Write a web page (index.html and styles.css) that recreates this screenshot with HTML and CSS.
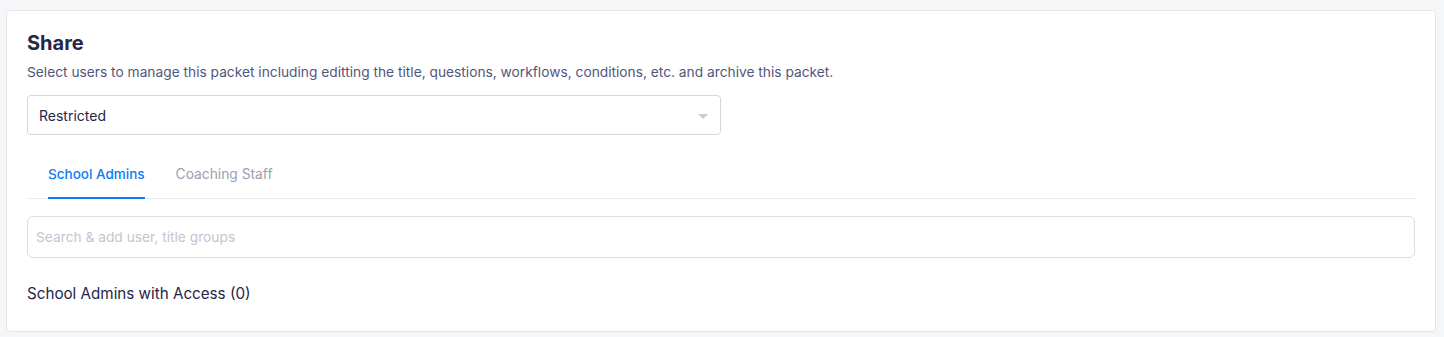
FILE: index.html
```html
<!DOCTYPE html>
<html lang="en">
<head>
  <meta charset="UTF-8">
  <meta name="viewport" content="width=device-width, initial-scale=1.0">
  <title>Share packet</title>
  <link rel="stylesheet" href="styles.css">
</head>
<body>
  <div class="card">
    <h2 class="card-title">Share</h2>
    <p class="card-desc">Select users to manage this packet including editting the title, questions, workflows, conditions, etc. and archive this packet.</p>

    <!-- access select -->
    <div class="select">
      <span class="select-value">Restricted</span>
      <span class="select-caret"></span>
    </div>

    <!-- tabs -->
    <div class="tabs">
      <div class="tab active">School Admins</div>
      <div class="tab">Coaching Staff</div>
    </div>

    <div class="search">
      <input type="text" class="search-input" placeholder="Search &amp; add user, title groups">
    </div>

    <div class="access-title">School Admins with Access (0)</div>
  </div>
</body>
</html>
```

FILE: styles.css
```css
body {
  margin: 0;
  padding: 10px 8px 5px 6px;
  background-color: #f5f6f8;
  font-family: Inter, "Noto Sans", Arial, sans-serif;
  color: #25264a;
}

.card {
  background-color: #fff;
  border: 1px solid #e5e6ea;
  border-radius: 4px;
  padding: 20px;
  height: 280px;
}

.card-title {
  margin: 0;
  font-size: 20px;
  font-weight: 700;
  line-height: 24px;
  color: #25264a;
}

.card-desc {
  margin: 8px 0 0 0;
  font-size: 13.75px;
  line-height: 18px;
  color: #51577d;
}

.select {
  display: flex;
  align-items: center;
  justify-content: space-between;
  margin-top: 14px;
  padding: 0 11px;
  box-sizing: border-box;
  width: 694px;
  height: 40px;
  border: 1px solid #d6d6dc;
  border-radius: 4px;
}

.select-value {
  font-size: 14px;
  color: #25264a;
}

.select-caret {
  width: 0;
  height: 0;
  border-left: 5px solid transparent;
  border-right: 5px solid transparent;
  border-top: 5px solid #c8c9d6;
  margin-right: 1px;
  margin-top: 2px;
}

.tabs {
  display: flex;
  gap: 31px;
  margin-top: 20px;
  padding-left: 21px;
  border-bottom: 1px solid #ebebef;
}

.tab {
  font-size: 13.8px;
  line-height: 18px;
  padding: 10px 0 14px 0;
  color: #9d9db3;
  border-bottom: 2px solid transparent;
  margin-bottom: -1px;
}

.tab.active {
  font-size: 13.5px;
  color: #0a7cf5;
  font-weight: 500;
  border-bottom-color: #0a7cf5;
}

.search {
  margin-top: 17px;
}

.search-input {
  display: block;
  width: 100%;
  height: 42px;
  box-sizing: border-box;
  padding: 0 8px;
  border: 1px solid #dcdce2;
  border-radius: 6px;
  font-family: inherit;
  font-size: 13.75px;
  color: #25264a;
  outline: none;
}

.search-input::placeholder {
  color: #c4c4d2;
}

.access-title {
  margin-top: 26px;
  font-size: 15.2px;
  line-height: 20px;
  color: #25264a;
}
```
